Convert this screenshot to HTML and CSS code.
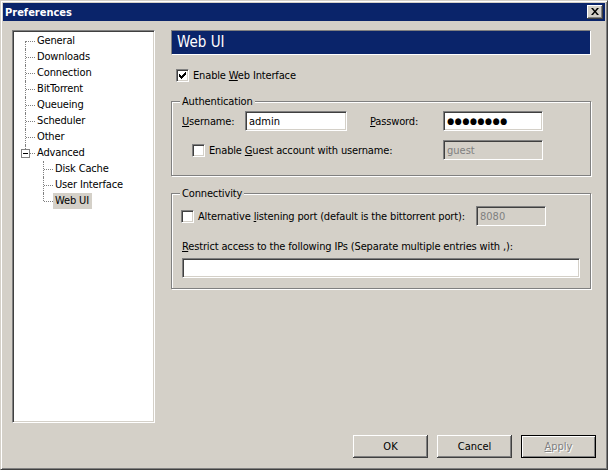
FILE: index.html
```html
<!DOCTYPE html>
<html lang="en">
<head>
  <meta charset="UTF-8" />
  <meta name="viewport" content="width=device-width, initial-scale=1.0"/>
  <title>Preferences</title>
  <link rel="stylesheet" href="styles.css">
</head>
<body>

  <div class="window">
    <div class="titlebar">
      <span class="title">Preferences</span>
      <button class="close-btn">
        <svg width="8" height="7" viewBox="0 0 8 7"><path d="M0 0h2l2 2.5 2-2.5h2l-3 3.5 3 3.5h-2l-2-2.5-2 2.5h-2l3-3.5z" fill="#000"/></svg>
      </button>
    </div>

    <div class="dialog">
      <div class="main">

        <!-- category tree -->
        <div class="tree">
          <ul class="tree-root">
            <li>General</li>
            <li>Downloads</li>
            <li>Connection</li>
            <li>BitTorrent</li>
            <li>Queueing</li>
            <li>Scheduler</li>
            <li>Other</li>
            <li><span class="toggle"></span>Advanced
              <ul>
                <li>Disk Cache</li>
                <li>User Interface</li>
                <li class="selected"><span>Web UI</span></li>
              </ul>
            </li>
          </ul>
        </div>

        <!-- page -->
        <div class="page">
          <div class="page-header">Web UI</div>

          <label class="check-row enable-row">
            <span class="check"><svg width="7" height="7" viewBox="0 0 7 7" shape-rendering="crispEdges"><path d="M0 2h1v1h1v1h1v-1h1v-1h1v-1h1v-1h1v3h-1v1h-1v1h-1v1h-1v1h-1v-1h-1v-1h-1z" fill="#000"/></svg></span>
            <span>Enable <u>W</u>eb Interface</span>
          </label>

          <fieldset class="group auth">
            <legend>Authentication</legend>
            <div class="field-row">
              <label class="lbl-user"><u>U</u>sername:</label>
              <input class="edit edit-user" type="text" value="admin">
              <label class="lbl-pass"><u>P</u>assword:</label>
              <input class="edit edit-pass secret" type="text" value="●●●●●●●●">
            </div>
            <div class="field-row guest-row">
              <label class="check-row guest-check">
                <span class="check"></span>
                <span>Enable <u>G</u>uest account with username:</span>
              </label>
              <input class="edit edit-pass" type="text" value="guest" disabled>
            </div>
          </fieldset>

          <fieldset class="group conn">
            <legend>Connectivity</legend>
            <div class="field-row">
              <label class="check-row port-check">
                <span class="check"></span>
                <span>Alternative <u>l</u>istening port (default is the bittorrent port):</span>
              </label>
              <input class="edit edit-port" type="text" value="8080" disabled>
            </div>
            <label class="ip-label"><u>R</u>estrict access to the following IPs (Separate multiple entries with ,):</label>
            <input class="edit edit-ips" type="text" value="">
          </fieldset>
        </div>
      </div>

      <div class="actions">
        <button class="btn">OK</button>
        <button class="btn">Cancel</button>
        <button class="btn default" disabled><u>A</u>pply</button>
      </div>
    </div>
  </div>

</body>
</html>
```

FILE: styles.css
```css
body {
  margin: 0;
  font-family: "DejaVu Sans Condensed", "Liberation Sans", sans-serif;
  font-size: 11px;
  line-height: 13px;
  letter-spacing: -0.15px;
  color: #000;
  background: #d4d0c8;
}

.window {
  width: 608px;
  height: 470px;
  box-sizing: border-box;
  border: 1px solid;
  border-color: #d4d0c8 #404040 #404040 #d4d0c8;
  box-shadow: inset 1px 1px #fff, inset -1px -1px #808080;
  padding: 2px;
  background: #d4d0c8;
  display: flex;
  flex-direction: column;
}

/* Title bar */
.titlebar {
  height: 18px;
  background: #0a246a;
  display: flex;
  align-items: center;
  justify-content: space-between;
  padding: 0 2px;
}

.title {
  color: #fff;
  font-weight: bold;
  letter-spacing: 0;
}

.close-btn {
  width: 16px;
  height: 14px;
  padding: 0;
  border: none;
  background: #d4d0c8;
  box-shadow: inset -1px -1px #404040, inset 1px 1px #fff, inset -2px -2px #808080;
  display: flex;
  align-items: center;
  justify-content: center;
  padding-bottom: 1px;
}

.dialog {
  flex: 1;
  padding: 9px;
  display: flex;
  flex-direction: column;
}

.main {
  display: flex;
  gap: 16px;
  height: 393px;
}

/* Tree */
.tree {
  width: 143px;
  box-sizing: border-box;
  background: #fff;
  border: 1px solid;
  border-color: #808080 #fff #fff #808080;
  box-shadow: inset 1px 1px #404040, inset -1px -1px #d4d0c8;
  padding: 2px 1px 1px;
}

.tree ul {
  list-style: none;
  margin: 0;
  padding: 0;
}

.tree li {
  position: relative;
  padding-left: 23px;
  line-height: 16px;
  white-space: nowrap;
}

.tree li::before {
  content: "";
  position: absolute;
  left: 12px;
  top: 8px;
  width: 9px;
  border-top: 1px dotted #808080;
}

.tree li::after {
  content: "";
  position: absolute;
  left: 11px;
  top: 0;
  height: 16px;
  border-left: 1px dotted #808080;
}

.tree-root > li:first-child::after {
  top: 8px;
  height: 8px;
}

.tree-root > li:last-child::after {
  height: 8px;
}

.tree li li {
  padding-left: 18px;
}

.tree li li::before {
  left: 7px;
  width: 9px;
}

.tree li li::after {
  left: 6px;
}

.tree li li:last-child::after {
  height: 8px;
}

.toggle {
  position: absolute;
  left: 7px;
  top: 4px;
  width: 9px;
  height: 9px;
  box-sizing: border-box;
  border: 1px solid #808080;
  background: #fff;
  z-index: 1;
}

.toggle::after {
  content: "";
  position: absolute;
  left: 1px;
  top: 3px;
  width: 5px;
  height: 1px;
  background: #000;
}

.tree .selected span {
  display: inline-block;
  background: #d4d0c8;
  padding: 0 3px 0 2px;
  margin-left: -2px;
}

/* Page */
.page {
  flex: 1;
  margin-right: 5px;
  display: flex;
  flex-direction: column;
}

.page-header {
  height: 25px;
  box-sizing: border-box;
  border: 1px solid;
  border-color: #808080 #fff #fff #808080;
  background: #0a246a;
  color: #fff;
  font-size: 15px;
  line-height: 23px;
  letter-spacing: 0;
  padding-left: 5px;
}

.check-row {
  display: flex;
  align-items: center;
  white-space: nowrap;
}

.check {
  width: 13px;
  height: 13px;
  box-sizing: border-box;
  flex-shrink: 0;
  border: 1px solid;
  border-color: #808080 #fff #fff #808080;
  box-shadow: inset 1px 1px #404040, inset -1px -1px #d4d0c8;
  background: #fff;
  margin-right: 4px;
  display: flex;
  align-items: center;
  justify-content: center;
}

.enable-row {
  margin-top: 13px;
  padding-left: 5px;
  height: 14px;
}

/* Group boxes */
.group {
  margin: 0;
  border: 1px solid #808080;
  box-shadow: inset 1px 1px #fff, 1px 1px #fff;
  padding: 0 10px;
  min-width: 0;
}

.group legend {
  padding: 0 2px;
  margin-left: -2px;
  line-height: 13px;
  background: #d4d0c8;
}

.auth {
  margin-top: 13px;
  padding-top: 3px;
  padding-bottom: 15px;
}

.conn {
  margin-top: 11px;
  padding-top: 6px;
  padding-bottom: 10px;
}

.field-row {
  display: flex;
  align-items: center;
  height: 20px;
}

.lbl-user {
  width: 63px;
}

.lbl-pass {
  width: 73px;
  margin-left: 23px;
}

.guest-row {
  margin-top: 9px;
}

.guest-check {
  width: 261px;
  padding-left: 10px;
  box-sizing: border-box;
}

.port-check {
  width: 295px;
  margin-left: -1px;
}

.ip-label {
  display: block;
  margin-top: 14px;
  white-space: nowrap;
}

/* Edit boxes */
.edit {
  height: 20px;
  box-sizing: border-box;
  margin: 0;
  border: 1px solid;
  border-color: #808080 #fff #fff #808080;
  box-shadow: inset 1px 1px #404040, inset -1px -1px #d4d0c8;
  background: #fff;
  font: inherit;
  color: #000;
  padding: 0 3px;
  outline: none;
}

.edit:disabled {
  background: #d4d0c8;
  color: #808080;
}

.edit.secret {
  font-size: 9px;
  letter-spacing: 0.5px;
}

.edit-user {
  width: 102px;
}

.edit-pass {
  width: 100px;
}

.edit-port {
  width: 70px;
}

.edit-ips {
  display: block;
  width: 100%;
  margin-top: 5px;
}

/* Buttons */
.actions {
  display: flex;
  justify-content: flex-end;
  gap: 9px;
  margin-top: 12px;
}

.btn {
  width: 75px;
  height: 23px;
  box-sizing: border-box;
  border: none;
  background: #d4d0c8;
  box-shadow: inset -1px -1px #404040, inset 1px 1px #fff, inset -2px -2px #808080;
  font: inherit;
  color: #000;
  padding: 0;
}

.btn.default {
  border: 1px solid #000;
  box-shadow: inset 1px 1px #fff, inset -1px -1px #808080;
}

.btn:disabled {
  color: #808080;
  text-shadow: 1px 1px #fff;
}
```
